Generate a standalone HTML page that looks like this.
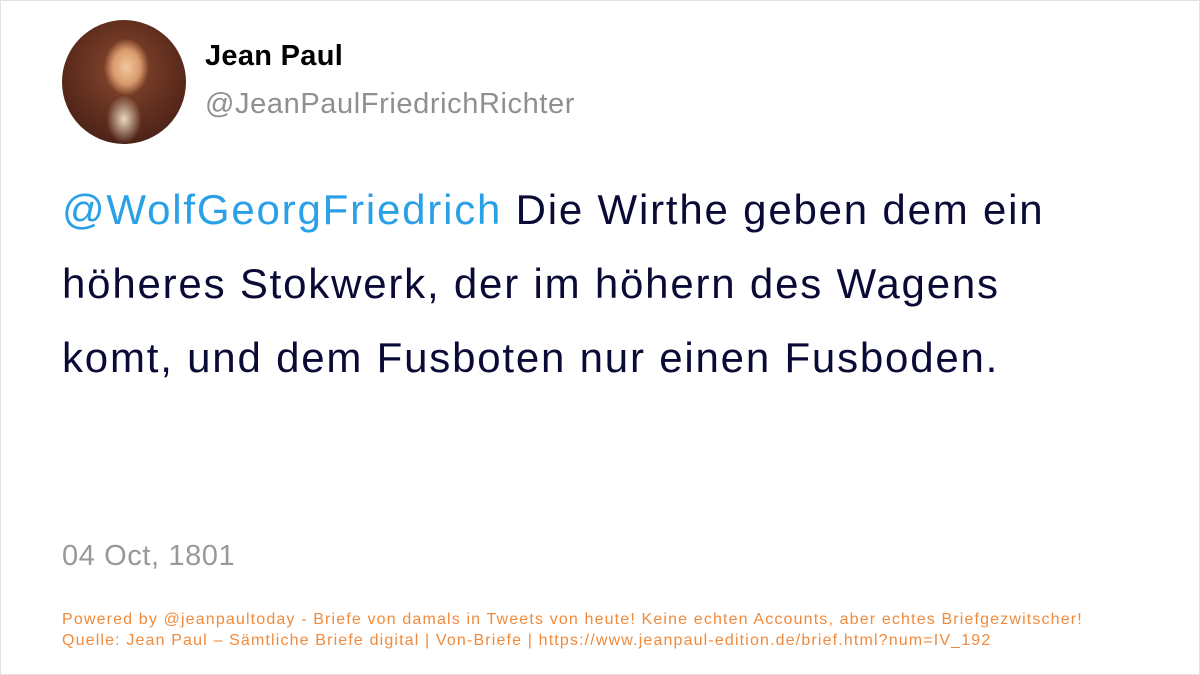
<!DOCTYPE html>
<html><head><meta charset="utf-8"><style>
html,body{margin:0;padding:0;background:#fff;}
body{width:1200px;height:675px;position:relative;overflow:hidden;font-family:"Liberation Sans",sans-serif;}
.frame{position:absolute;left:0;top:0;width:1198px;height:673px;border:1px solid #e1e1e1;}
.av{position:absolute;left:62px;top:20px;width:124px;height:124px;border-radius:50%;
background:radial-gradient(ellipse 30px 38px at 52% 38%,#f2c9a0 0%,#d99a6c 45%,transparent 75%),radial-gradient(ellipse 22px 30px at 50% 80%,#e8d8c0 0%,transparent 80%),radial-gradient(circle at 50% 40%,#8a4a2e 0%,#5a2a1c 60%,#3a1a12 100%);}
.name{position:absolute;left:205px;top:40px;font-size:29px;font-weight:bold;color:#000;letter-spacing:0.3px;}
.handle{position:absolute;left:205px;top:88px;font-size:29px;color:#8f8f8f;letter-spacing:0.6px;}
.text{position:absolute;left:62px;top:173px;width:1130px;font-size:42px;line-height:74px;color:#0a0a36;letter-spacing:1.8px;white-space:nowrap;}
.text span{color:#2aa0e6;}
.date{position:absolute;left:62px;top:540px;font-size:29px;color:#999;letter-spacing:0.6px;}
.foot{position:absolute;left:62px;top:609px;font-size:16px;line-height:21px;color:#f08a3c;white-space:nowrap;letter-spacing:1.15px;}
</style></head><body>
<div class="frame"></div>
<div class="av"></div>
<div class="name">Jean Paul</div>
<div class="handle">@JeanPaulFriedrichRichter</div>
<div class="text"><span>@WolfGeorgFriedrich</span> Die Wirthe geben dem ein<br>höheres Stokwerk, der im höhern des Wagens<br>komt, und dem Fusboten nur einen Fusboden.</div>
<div class="date">04 Oct, 1801</div>
<div class="foot">Powered by @jeanpaultoday - Briefe von damals in Tweets von heute! Keine echten Accounts, aber echtes Briefgezwitscher!<br>Quelle: Jean Paul – Sämtliche Briefe digital | Von-Briefe | https://www.jeanpaul-edition.de/brief.html?num=IV_192</div>
</body></html>
